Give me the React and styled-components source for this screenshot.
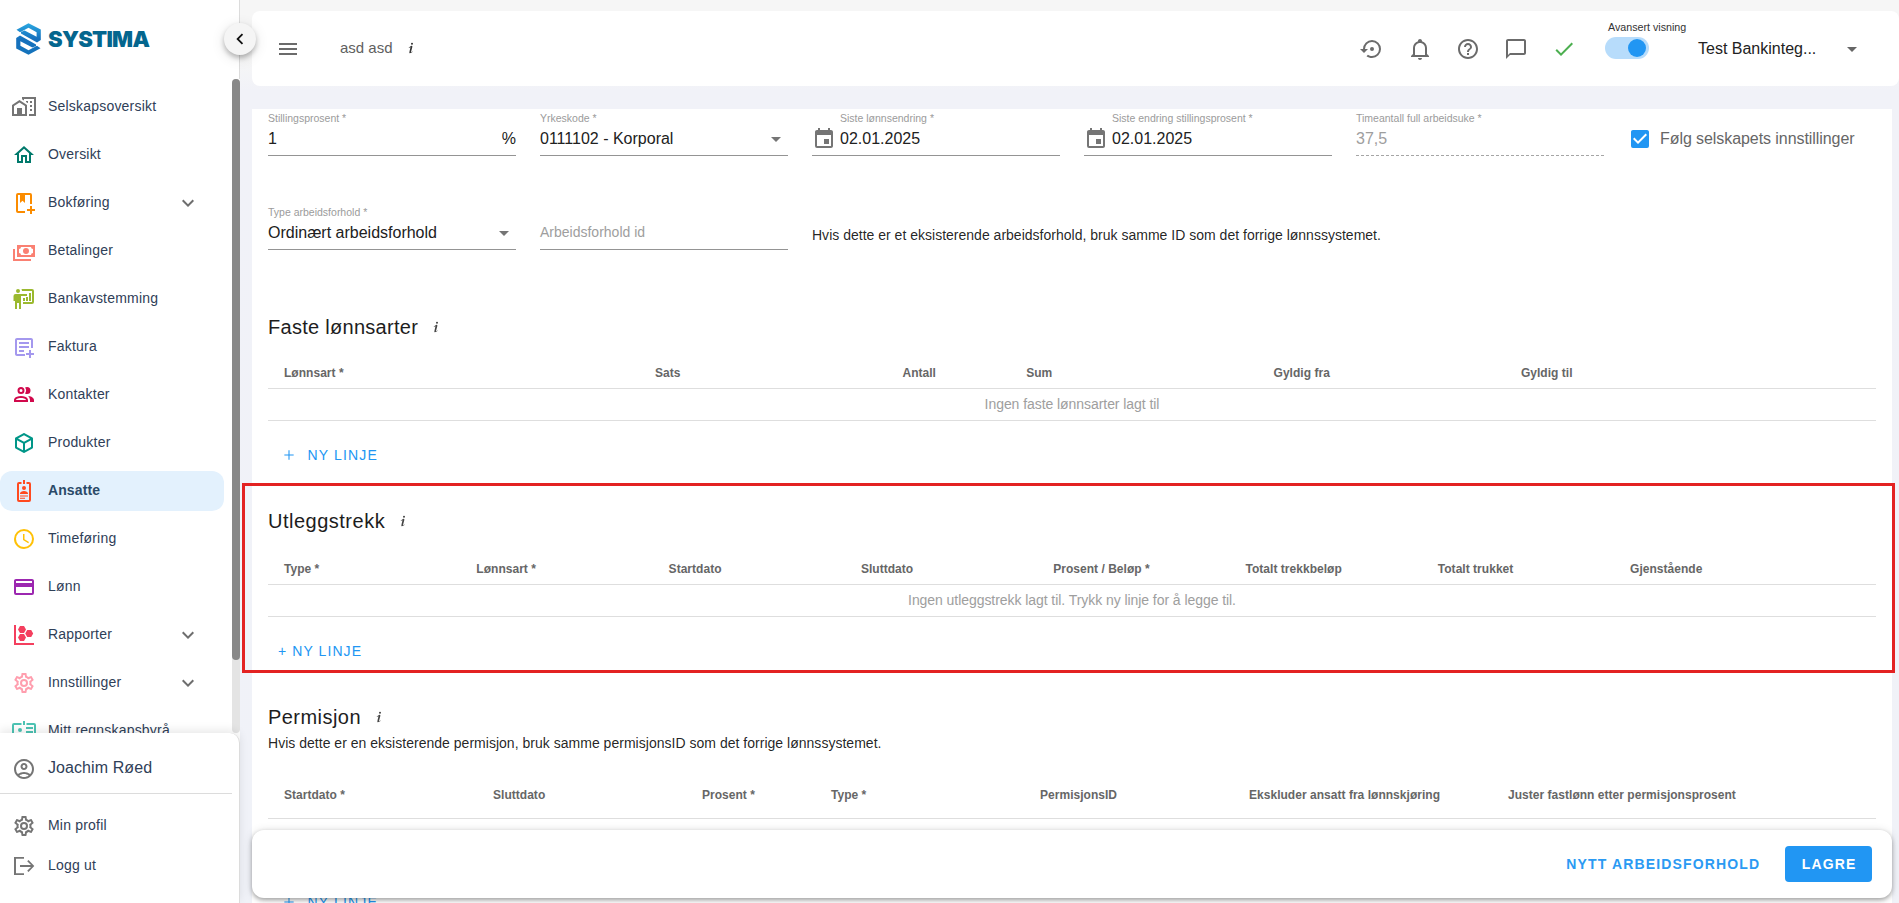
import React from "react";
import styled, { createGlobalStyle, css } from "styled-components";
import {
  MdArrowDropDown,
  MdEvent,
  MdHelpOutline,
  MdChatBubbleOutline,
  MdOutlineHome,
  MdOutlineAccountCircle,
} from "react-icons/md";

const GlobalStyle = createGlobalStyle`
  *, *::before, *::after { box-sizing: border-box; }
  body {
    margin: 0;
    overflow: hidden;
    font-family: "Liberation Sans", Arial, sans-serif;
    color: rgba(0, 0, 0, 0.87);
  }
`;

/* ---------- icons ---------- */

const paths = {
  homeCity:
    "M10 2V4.26L12 5.59V4H22V19H17V21H24V2H10M7.5 5L0 10V21H15V10L7.5 5M14 6V6.93L15.61 8H16V6H14M18 6V8H20V6H18M7.5 7.5L13 11V19H10V13H5V19H2V11L7.5 7.5M18 10V12H20V10H18M18 14V16H20V14H18Z",
  bookPlus:
    "M18 2A2 2 0 0 1 20 4V13H18V4H13V12L10.5 9.75L8 12V4H6V20H13V22H6A2 2 0 0 1 4 20V4A2 2 0 0 1 6 2ZM18 15V18H15V20H18V23H20V20H23V18H20V15Z",
  cash:
    "M5,6H23V18H5V6M14,9A3,3 0 0,1 17,12A3,3 0 0,1 14,15A3,3 0 0,1 11,12A3,3 0 0,1 14,9M9,8A2,2 0 0,1 7,10V14A2,2 0 0,1 9,16H19A2,2 0 0,1 21,14V10A2,2 0 0,1 19,8H9M1,10H3V20H19V22H1V10Z",
  board:
    "M20,17A2,2 0 0,0 22,15V4A2,2 0 0,0 20,2H9.46C9.81,2.61 10,3.3 10,4H20V15H11V17M15,7V9H9V22H7V16H5V22H3V14H1.5V9A2,2 0 0,1 3.5,7H15M8,4A2,2 0 0,1 6,6A2,2 0 0,1 4,4A2,2 0 0,1 6,2A2,2 0 0,1 8,4M17,6H19V14H17V6M14,10H16V14H14V10M11,11H13V14H11V11Z",
  textPlus:
    "M5 3C3.9 3 3 3.9 3 5V19C3 20.1 3.9 21 5 21H13V19H5V5H19V13H21V5C21 3.9 20.1 3 19 3H5M7 7V9H17V7H7M7 11V13H17V11H7M7 15V17H12V15H7M17 15V18H14V20H17V23H19V20H22V18H19V15Z",
  people:
    "M13.07 10.41A5 5 0 0 0 13.07 4.59A3.39 3.39 0 0 1 15 4A3.5 3.5 0 0 1 15 11A3.39 3.39 0 0 1 13.07 10.41M5.5 7.5A3.5 3.5 0 1 1 9 11A3.5 3.5 0 0 1 5.5 7.5M7.5 7.5A1.5 1.5 0 1 0 9 6A1.5 1.5 0 0 0 7.5 7.5M16 17V19H2V17S2 13 9 13 16 17 16 17M14 17C13.86 16.22 12.67 15 9 15S4.07 16.31 4 17M15.95 13A5.32 5.32 0 0 1 18 17V19H22V17S22 13.37 15.94 13Z",
  cube:
    "M21,16.5C21,16.88 20.79,17.21 20.47,17.38L12.57,21.82C12.41,21.94 12.21,22 12,22C11.79,22 11.59,21.94 11.43,21.82L3.53,17.38C3.21,17.21 3,16.88 3,16.5V7.5C3,7.12 3.21,6.79 3.53,6.62L11.43,2.18C11.59,2.06 11.79,2 12,2C12.21,2 12.41,2.06 12.57,2.18L20.47,6.62C20.79,6.79 21,7.12 21,7.5V16.5M12,4.15L6.04,7.5L12,10.85L17.96,7.5L12,4.15M5,15.91L11,19.29V12.58L5,9.21V15.91M19,15.91V9.21L13,12.58V19.29L19,15.91Z",
  badge:
    "M7 3H9.5V5H7V21H17V5H14.5V3H17A2 2 0 0 1 19 5V21A2 2 0 0 1 17 23H7A2 2 0 0 1 5 21V5A2 2 0 0 1 7 3ZM11 1H13V5H11ZM12 7A2 2 0 0 1 12 11A2 2 0 0 1 12 7ZM8 14.5C8 13 10 12 12 12S16 13 16 14.5V15H8ZM8 16.5H16V17.5H8ZM8 18.7H13V19.7H8Z",
  clock:
    "M12,20A8,8 0 0,0 20,12A8,8 0 0,0 12,4A8,8 0 0,0 4,12A8,8 0 0,0 12,20M12,2A10,10 0 0,1 22,12A10,10 0 0,1 12,22C6.47,22 2,17.5 2,12A10,10 0 0,1 12,2M12.5,7V12.25L17,14.92L16.25,16.15L11,13V7H12.5Z",
  card:
    "M20,8H4V6H20M20,18H4V12H20M20,4H4C2.89,4 2,4.89 2,6V18A2,2 0 0,0 4,20H20A2,2 0 0,0 22,18V6C22,4.89 21.1,4 20,4Z",
  scatter:
    "M2,2H4V20H22V22H2V2M8 3H12L14 6.5L12 10H8L6 6.5ZM8 11H12L14 14.5L12 18H8L6 14.5ZM15.2 7H19.2L21.2 10.5L19.2 14H15.2L13.2 10.5Z",
  cog:
    "M12,8A4,4 0 0,1 16,12A4,4 0 0,1 12,16A4,4 0 0,1 8,12A4,4 0 0,1 12,8M12,10A2,2 0 0,0 10,12A2,2 0 0,0 12,14A2,2 0 0,0 14,12A2,2 0 0,0 12,10M10,22C9.75,22 9.54,21.82 9.5,21.58L9.13,18.93C8.5,18.68 7.96,18.34 7.44,17.94L4.95,18.95C4.73,19.03 4.46,18.95 4.34,18.73L2.34,15.27C2.21,15.05 2.27,14.78 2.46,14.63L4.57,12.97L4.5,12L4.57,11L2.46,9.37C2.27,9.22 2.21,8.95 2.34,8.73L4.34,5.27C4.46,5.05 4.73,4.96 4.95,5.05L7.44,6.05C7.96,5.66 8.5,5.32 9.13,5.07L9.5,2.42C9.54,2.18 9.75,2 10,2H14C14.25,2 14.46,2.18 14.5,2.42L14.87,5.07C15.5,5.32 16.04,5.66 16.56,6.05L19.05,5.05C19.27,4.96 19.54,5.05 19.66,5.27L21.66,8.73C21.79,8.95 21.73,9.22 21.54,9.37L19.43,11L19.5,12L19.43,13L21.54,14.63C21.73,14.78 21.79,15.05 21.66,15.27L19.66,18.73C19.54,18.95 19.27,19.04 19.05,18.95L16.56,17.95C16.04,18.34 15.5,18.68 14.87,18.93L14.5,21.58C14.46,21.82 14.25,22 14,22H10M11.25,4L10.88,6.61C9.68,6.86 8.62,7.5 7.85,8.39L5.44,7.35L4.69,8.65L6.8,10.2C6.4,11.37 6.4,12.64 6.8,13.8L4.68,15.36L5.43,16.66L7.86,15.62C8.63,16.5 9.68,17.14 10.87,17.38L11.24,20H12.76L13.13,17.39C14.32,17.14 15.37,16.5 16.14,15.62L18.57,16.66L19.32,15.36L17.2,13.81C17.6,12.64 17.6,11.37 17.2,10.2L19.31,8.65L18.56,7.35L16.15,8.39C15.38,7.5 14.32,6.86 13.12,6.62L12.75,4H11.25Z",
  idCard:
    "M2 4H9.5V6H2V20H22V6H14.5V4H22A2 2 0 0 1 24 6V20A2 2 0 0 1 22 22H2A2 2 0 0 1 0 20V6A2 2 0 0 1 2 4ZM11 2H13V6H11ZM8 9A2 2 0 0 1 8 13A2 2 0 0 1 8 9ZM14 8H21V10H14ZM14 12H21V14H14Z",
  logout:
    "M2 3H12V4.8H4V19.2H12V21H2ZM8 11.1H19L15.2 7.3L16.5 6L22.3 12L16.5 18L15.2 16.7L19 12.9H8Z",
  chevronDown: "M7.41,8.58L12,13.17L16.59,8.58L18,10L12,16L6,10L7.41,8.58Z",
  chevronLeft: "M15.41,16.58L10.83,12L15.41,7.41L14,6L8,12L14,18L15.41,16.58Z",
  menu: "M3,6H21V8H3V6M3,11H21V13H3V11M3,16H21V18H3V16Z",
  restore:
    "M12,3A9,9 0 0,0 3,12H0L4,16L8,12H5A7,7 0 0,1 12,5A7,7 0 0,1 19,12A7,7 0 0,1 12,19C10.5,19 9.09,18.5 7.94,17.7L6.5,19.14C8.04,20.3 9.94,21 12,21A9,9 0 0,0 21,12A9,9 0 0,0 12,3M14,12A2,2 0 0,0 12,10A2,2 0 0,0 10,12A2,2 0 0,0 12,14A2,2 0 0,0 14,12Z",
  bell:
    "M10 21H14C14 22.1 13.1 23 12 23S10 22.1 10 21M21 19V20H3V19L5 17V11C5 7.9 7.03 5.17 10 4.29C10 4.19 10 4.1 10 4C10 2.9 10.9 2 12 2S14 2.9 14 4C14 4.1 14 4.19 14 4.29C16.97 5.17 19 7.9 19 11V17L21 19M17 11C17 8.24 14.76 6 12 6S7 8.24 7 11V18H17V11Z",
  check: "M21,7L9,19L3.5,13.5L4.91,12.09L9,16.17L19.59,5.59L21,7Z",
  checkbox:
    "M10,17L5,12L6.41,10.58L10,14.17L17.59,6.58L19,8M19,3H5C3.89,3 3,3.89 3,5V19A2,2 0 0,0 5,21H19A2,2 0 0,0 21,19V5C21,3.89 20.1,3 19,3Z",
  plus: "M19,12.8H12.8V19H11.2V12.8H5V11.2H11.2V5H12.8V11.2H19V12.8Z",
  info:
    "M13.5,4A1.5,1.5 0 0,0 12,5.5A1.5,1.5 0 0,0 13.5,7A1.5,1.5 0 0,0 15,5.5A1.5,1.5 0 0,0 13.5,4M13.14,8.77C11.95,8.87 8.7,11.46 8.7,11.46C8.5,11.61 8.56,11.6 8.72,11.88C8.88,12.15 8.86,12.17 9.05,12.04C9.25,11.91 9.58,11.7 10.13,11.36C12.25,10 10.47,13.14 9.56,18.43C9.2,21.05 11.56,19.7 12.17,19.3C12.77,18.91 14.38,17.8 14.54,17.69C14.76,17.54 14.6,17.42 14.43,17.17C14.31,17 14.19,17.12 14.19,17.12C13.54,17.55 12.35,18.45 12.19,17.88C12,17.31 13.22,13.4 13.89,10.71C14,10.07 14.3,8.67 13.14,8.77Z",
};

const Svg = styled.svg`
  display: block;
  flex: none;
  width: ${(p) => p.$size}px;
  height: ${(p) => p.$size}px;
  fill: ${(p) => p.$color || "currentColor"};
`;

const Icon = ({ name, size = 24, color }) => (
  <Svg viewBox="0 0 24 24" $size={size} $color={color}>
    <path d={paths[name]} />
  </Svg>
);

/* ---------- sidebar ---------- */

const Page = styled.div`
  display: flex;
  width: 100vw;
  height: 100vh;
  position: relative;
  overflow: hidden;
  background: linear-gradient(#f6f6f6 0, #f6f6f6 60px, #f1f2f8 90px, #f0f2f8 100%);
`;

const Sidebar = styled.aside`
  flex: none;
  width: 240px;
  display: flex;
  flex-direction: column;
  background: #fff;
`;

const Brand = styled.div`
  flex: none;
  height: 79px;
  display: flex;
  align-items: flex-start;
  gap: 7px;
  padding: 23px 0 0 16px;
  border-right: 1px solid #dcdcdc;
`;

const BrandMark = styled.svg`
  width: 25px;
  height: 32px;
`;

const BrandName = styled.div`
  font: 900 22px/33px Inter, sans-serif;
  letter-spacing: -0.75px;
  color: #04668e;
`;

const NavArea = styled.div`
  height: 654px;
  display: flex;
  overflow: hidden;
`;

const NavList = styled.nav`
  flex: 1;
  display: flex;
  flex-direction: column;
  gap: 8px;
  padding: 8px 8px 0 0;
`;

const NavItem = styled.div`
  flex: none;
  height: ${(p) => p.$height || 40}px;
  display: flex;
  align-items: center;
  gap: 12px;
  padding: 0 24px 0 12px;
  border-radius: 12px;
  font-size: ${(p) => p.$size || 14}px;
  letter-spacing: ${(p) => (p.$size ? 0.08 : 0.2)}px;
  color: #2f4058;
  ${(p) =>
    p.$active &&
    css`
      background: #e3f1fd;
      color: #2b4a68;
      font-weight: 700;
      letter-spacing: 0.1px;
    `}
  > svg {
    flex: none;
  }
`;

const NavLabel = styled.span`
  flex: 1;
  padding-bottom: 2px;
  white-space: nowrap;
`;

const ScrollTrack = styled.div`
  width: 8px;
  border-radius: 4px;
  background: #e4e4e4;
`;

const ScrollThumb = styled.div`
  height: 581px;
  border-radius: 4px;
  background: #888;
`;

const UserPanel = styled.div`
  flex: 1;
  position: relative;
  border-right: 1px solid #dcdcdc;
  border-top-right-radius: 10px;
  background: #fff;
  box-shadow: 0 -3px 10px rgba(0, 0, 0, 0.09);
  padding-top: 12px;
`;

const UserDivider = styled.div`
  width: 232px;
  height: 1px;
  margin: 0 0 12px;
  background: #dcdcdc;
`;

const CollapseButton = styled.button`
  position: absolute;
  left: 224px;
  top: 23px;
  width: 32px;
  height: 32px;
  padding: 0;
  border: 0;
  border-radius: 50%;
  display: grid;
  place-items: center;
  background: #f5f5f5;
  color: #111;
  box-shadow: 0 3px 5px rgba(0, 0, 0, 0.24), 0 3px 14px rgba(0, 0, 0, 0.12);
`;

/* ---------- top bar ---------- */

const Main = styled.main`
  flex: 1;
  min-width: 0;
  display: flex;
  flex-direction: column;
  padding: 11px 0 0 12px;
`;

const TopBar = styled.header`
  flex: none;
  height: 75px;
  border-radius: 8px;
  background: #fff;
  display: flex;
  align-items: center;
  padding: 1px 35px 0 24px;
  color: #6b6b6b;
`;

const PersonName = styled.div`
  margin: 0 10px 0 40px;
  padding-bottom: 2px;
  font-size: 15px;
  line-height: 20px;
  color: #606060;
`;

const InfoMark = styled.span`
  padding-bottom: ${(p) => (p.$strong ? 2 : 0)}px;
  color: ${(p) => (p.$strong ? "#333" : "#444")};
`;

const TopActions = styled.div`
  margin-left: auto;
  display: flex;
  align-items: center;
  gap: 24px;
`;

const ModeSwitch = styled.div`
  width: 80px;
  height: 56px;
  margin-left: 5px;
  display: flex;
  flex-direction: column;
  gap: 3px;
  font-size: 10.7px;
  line-height: 13px;
  white-space: nowrap;
  color: #333;
  > span {
    padding-left: 3px;
  }
`;

const SwitchTrack = styled.div`
  width: 44px;
  height: 22px;
  padding: 2px 3px;
  border-radius: 11px;
  background: #b7dcfb;
  display: flex;
  justify-content: flex-end;
`;

const SwitchThumb = styled.div`
  width: 18px;
  height: 18px;
  border-radius: 50%;
  background: #2196f3;
`;

const CompanySelect = styled.div`
  width: 166px;
  margin-left: -11px;
  display: flex;
  align-items: center;
  justify-content: space-between;
  font-size: 16px;
  color: #222;
  svg {
    color: #666;
  }
`;

/* ---------- form ---------- */

const Card = styled.section`
  flex: 1;
  min-height: 0;
  margin: 23px 7px 0 0;
  padding: 0 16px;
  background: #fff;
  overflow: hidden;
`;

const FieldRow = styled.div`
  height: ${(p) => p.$height || 94}px;
  display: grid;
  grid-template-columns: repeat(6, 248px);
  column-gap: 24px;
  align-items: start;
`;

const FieldBox = styled.div`
  height: 47px;
  padding-top: 3px;
  border-bottom: 1px ${(p) => (p.$disabled ? "dashed #a5a5a5" : "solid #949494")};
`;

const FieldLabel = styled.div`
  height: 13px;
  padding-left: ${(p) => (p.$indent ? 28 : 0)}px;
  font-size: 10.5px;
  line-height: 13px;
  color: #9b9b9b;
`;

const FieldValue = styled.div`
  height: 24px;
  margin-top: ${(p) => (p.$placeholder ? 1 : 2)}px;
  display: flex;
  align-items: center;
  gap: 4px;
  font-size: ${(p) => (p.$placeholder ? 14 : 16)}px;
  color: ${(p) => (p.$placeholder || p.$disabled ? "#9e9e9e" : "#212121")};
  svg {
    flex: none;
    color: #757575;
  }
`;

const FieldText = styled.span`
  flex: 1;
  white-space: nowrap;
`;

const Field = ({ label, value, suffix, select, date, disabled, placeholder }) => (
  <FieldBox $disabled={disabled}>
    <FieldLabel $indent={date}>{label}</FieldLabel>
    <FieldValue $disabled={disabled} $placeholder={placeholder}>
      {date && <MdEvent size={24} />}
      <FieldText>{value}</FieldText>
      {suffix && <span>{suffix}</span>}
      {select && <MdArrowDropDown size={24} />}
    </FieldValue>
  </FieldBox>
);

const CheckField = styled.label`
  display: flex;
  align-items: center;
  gap: 8px;
  padding-top: 18px;
  font-size: 16px;
  letter-spacing: -0.07px;
  white-space: nowrap;
  color: #666;
`;

const FieldHint = styled.p`
  margin: 22px 0 0;
  font-size: 14px;
  line-height: 20px;
  letter-spacing: 0.01px;
  white-space: nowrap;
`;

/* ---------- tables ---------- */

const Section = styled.section`
  height: ${(p) => p.$height}px;
`;

const SectionTitle = styled.h2`
  margin: 0;
  height: 28px;
  display: flex;
  align-items: center;
  gap: 10px;
  font-size: 20px;
  font-weight: 400;
  letter-spacing: ${(p) => p.$tracking}px;
  color: #1d1d1d;
`;

const SectionNote = styled.p`
  margin: 2px 0 0;
  font-size: 14px;
  line-height: 20px;
  letter-spacing: 0.02px;
`;

const HeadRow = styled.div`
  display: grid;
  grid-template-columns: ${(p) => p.$cols};
  height: ${(p) => p.$height || 32}px;
  margin-top: ${(p) => p.$top}px;
  border-bottom: 1px solid #dedede;
`;

const HeadCell = styled.div`
  padding-left: 16px;
  font-size: 12px;
  line-height: 32px;
  font-weight: 700;
  letter-spacing: 0.03px;
  white-space: nowrap;
  color: #666;
`;

const EmptyRow = styled.div`
  height: 32px;
  border-bottom: 1px solid #dedede;
  text-align: center;
  font-size: 14px;
  line-height: 31px;
  letter-spacing: -0.06px;
  color: #9e9e9e;
`;

const AddLine = styled.button`
  height: 36px;
  margin: ${(p) => p.$top || 16}px 0 0;
  padding: 0 0 0 ${(p) => (p.$compact ? 10 : 13)}px;
  border: 0;
  background: none;
  display: flex;
  align-items: center;
  gap: ${(p) => (p.$compact ? 6 : 10.5)}px;
  font: 400 14px "Liberation Sans", sans-serif;
  letter-spacing: ${(p) => (p.$compact ? 1.08 : 1.16)}px;
  color: #2196f3;
`;

const FooterBar = styled.footer`
  position: absolute;
  left: 252px;
  right: 7px;
  bottom: 5px;
  height: 68px;
  border-radius: 12px;
  background: #fff;
  box-shadow: 0 2px 4px rgba(0, 0, 0, 0.3), 0 1px 10px rgba(0, 0, 0, 0.14);
  display: flex;
  align-items: center;
  justify-content: flex-end;
  gap: 8px;
  padding-right: 20px;
`;

const Button = styled.button`
  height: 36px;
  padding: 0 ${(p) => (p.$filled ? 15.5 : 17)}px 0 ${(p) => (p.$filled ? 16.5 : 17)}px;
  border: 0;
  border-radius: 4px;
  font: 700 14px "Liberation Sans", sans-serif;
  letter-spacing: 1.15px;
  white-space: nowrap;
  background: ${(p) => (p.$filled ? "#2196f3" : "transparent")};
  color: ${(p) => (p.$filled ? "#fff" : "#2b9af3")};
`;

const Highlight = styled.div`
  position: absolute;
  left: 242px;
  top: 483px;
  width: 1653px;
  height: 190px;
  border: 3px solid #e32222;
  pointer-events: none;
`;

const Table = ({ cols, labels, top, height }) => (
  <HeadRow $cols={cols} $top={top} $height={height}>
    {labels.map((label) => (
      <HeadCell key={label}>{label}</HeadCell>
    ))}
  </HeadRow>
);

const navItems = [
  { label: "Selskapsoversikt", icon: "homeCity", color: "#757575" },
  { label: "Oversikt", color: "#00796b" },
  { label: "Bokføring", icon: "bookPlus", color: "#fb8c00", expandable: true },
  { label: "Betalinger", icon: "cash", color: "#fa8072" },
  { label: "Bankavstemming", icon: "board", color: "#9bb92f" },
  { label: "Faktura", icon: "textPlus", color: "#a498ee" },
  { label: "Kontakter", icon: "people", color: "#d1094c" },
  { label: "Produkter", icon: "cube", color: "#009688" },
  { label: "Ansatte", icon: "badge", color: "#ff4a1f", active: true },
  { label: "Timeføring", icon: "clock", color: "#ffc107" },
  { label: "Lønn", icon: "card", color: "#9c27b0" },
  { label: "Rapporter", icon: "scatter", color: "#f43f5e", expandable: true },
  { label: "Innstillinger", icon: "cog", color: "#ff9eae", expandable: true },
  { label: "Mitt regnskapsbyrå", icon: "idCard", color: "#4dc4b4" },
];

export default function App() {
  return (
    <Page>
      <GlobalStyle />
      <Sidebar>
        <Brand>
          <BrandMark viewBox="0 0 25 32">
            <defs>
              <linearGradient id="mark" x1="0" y1="0" x2="0" y2="32" gradientUnits="userSpaceOnUse">
                <stop offset="0" stopColor="#2ba9e2" />
                <stop offset="0.5" stopColor="#1670bd" />
                <stop offset="1" stopColor="#1473bb" />
              </linearGradient>
            </defs>
            <path
              fill="url(#mark)"
              d="M0.5 6.8L12.5 0.2L24.8 6.6V17L21 19.4L5 10.6V9L8.6 7.4L20.6 13.8V9.2L12.5 4.8L4 9.2ZM24.5 25.2L12.5 31.8L0.2 25.4V15L4 12.6L20 21.4V23L16.4 24.6L4.4 18.2V22.8L12.5 27.2L21 22.8Z"
            />
          </BrandMark>
          <BrandName>SYSTIMA</BrandName>
        </Brand>
        <NavArea>
          <NavList>
            {navItems.map((item) => (
              <NavItem key={item.label} $active={item.active}>
                {item.icon ? (
                  <Icon name={item.icon} color={item.color} />
                ) : (
                  <MdOutlineHome size={24} color={item.color} />
                )}
                <NavLabel>{item.label}</NavLabel>
                {item.expandable && <Icon name="chevronDown" color="#6e6e6e" />}
              </NavItem>
            ))}
          </NavList>
          <ScrollTrack>
            <ScrollThumb />
          </ScrollTrack>
        </NavArea>
        <UserPanel>
          <NavItem $size={16} $height={48}>
            <MdOutlineAccountCircle size={24} color="#757575" />
            <NavLabel>Joachim Røed</NavLabel>
          </NavItem>
          <UserDivider />
          <NavItem>
            <Icon name="cog" color="#757575" />
            <NavLabel>Min profil</NavLabel>
          </NavItem>
          <NavItem>
            <Icon name="logout" color="#757575" />
            <NavLabel>Logg ut</NavLabel>
          </NavItem>
        </UserPanel>
      </Sidebar>

      <Main>
        <TopBar>
          <Icon name="menu" />
          <PersonName>asd asd</PersonName>
          <InfoMark $strong>
            <Icon name="info" size={16} />
          </InfoMark>
          <TopActions>
            <Icon name="restore" />
            <Icon name="bell" />
            <MdHelpOutline size={24} />
            <MdChatBubbleOutline size={24} />
            <Icon name="check" color="#4caf50" />
            <ModeSwitch>
              <span>Avansert visning</span>
              <SwitchTrack>
                <SwitchThumb />
              </SwitchTrack>
            </ModeSwitch>
            <CompanySelect>
              Test Bankinteg...
              <MdArrowDropDown size={24} />
            </CompanySelect>
          </TopActions>
        </TopBar>

        <Card>
          <FieldRow>
            <Field label="Stillingsprosent *" value="1" suffix="%" />
            <Field label="Yrkeskode *" value="0111102 - Korporal" select />
            <Field label="Siste lønnsendring *" value="02.01.2025" date />
            <Field label="Siste endring stillingsprosent *" value="02.01.2025" date />
            <Field label="Timeantall full arbeidsuke *" value="37,5" disabled />
            <CheckField>
              <Icon name="checkbox" color="#2196f3" />
              Følg selskapets innstillinger
            </CheckField>
          </FieldRow>
          <FieldRow $height={110}>
            <Field label="Type arbeidsforhold *" value="Ordinært arbeidsforhold" select />
            <Field value="Arbeidsforhold id" placeholder />
            <FieldHint>
              Hvis dette er et eksisterende arbeidsforhold, bruk samme ID som det forrige lønnssystemet.
            </FieldHint>
          </FieldRow>

          <Section $height={194}>
            <SectionTitle $tracking={0.28}>
              Faste lønnsarter
              <InfoMark>
                <Icon name="info" size={16} />
              </InfoMark>
            </SectionTitle>
            <Table
              top={16}
              cols="3fr 2fr 1fr 2fr 2fr 3fr"
              labels={["Lønnsart *", "Sats", "Antall", "Sum", "Gyldig fra", "Gyldig til"]}
            />
            <EmptyRow>Ingen faste lønnsarter lagt til</EmptyRow>
            <AddLine>
              <Icon name="plus" size={16} />
              NY LINJE
            </AddLine>
          </Section>

          <Section $height={196}>
            <SectionTitle $tracking={0.5}>
              Utleggstrekk
              <InfoMark>
                <Icon name="info" size={16} />
              </InfoMark>
            </SectionTitle>
            <Table
              top={18}
              cols="repeat(8, 192.3px)"
              labels={[
                "Type *",
                "Lønnsart *",
                "Startdato",
                "Sluttdato",
                "Prosent / Beløp *",
                "Totalt trekkbeløp",
                "Totalt trukket",
                "Gjenstående",
              ]}
            />
            <EmptyRow>Ingen utleggstrekk lagt til. Trykk ny linje for å legge til.</EmptyRow>
            <AddLine $compact>
              <span>+ NY LINJE</span>
            </AddLine>
          </Section>

          <Section $height={230}>
            <SectionTitle $tracking={0.45}>
              Permisjon
              <InfoMark>
                <Icon name="info" size={16} />
              </InfoMark>
            </SectionTitle>
            <SectionNote>
              Hvis dette er en eksisterende permisjon, bruk samme permisjonsID som det forrige lønnssystemet.
            </SectionNote>
            <Table
              top={26}
              height={40}
              cols="209px 209px 129px 209px 209px 259px 1fr"
              labels={[
                "Startdato *",
                "Sluttdato",
                "Prosent *",
                "Type *",
                "PermisjonsID",
                "Ekskluder ansatt fra lønnskjøring",
                "Juster fastlønn etter permisjonsprosent",
              ]}
            />
            <AddLine $top={65}>
              <Icon name="plus" size={16} />
              NY LINJE
            </AddLine>
          </Section>
        </Card>
      </Main>

      <CollapseButton>
        <Icon name="chevronLeft" size={22} />
      </CollapseButton>
      <FooterBar>
        <Button>NYTT ARBEIDSFORHOLD</Button>
        <Button $filled>LAGRE</Button>
      </FooterBar>
      <Highlight />
    </Page>
  );
}
